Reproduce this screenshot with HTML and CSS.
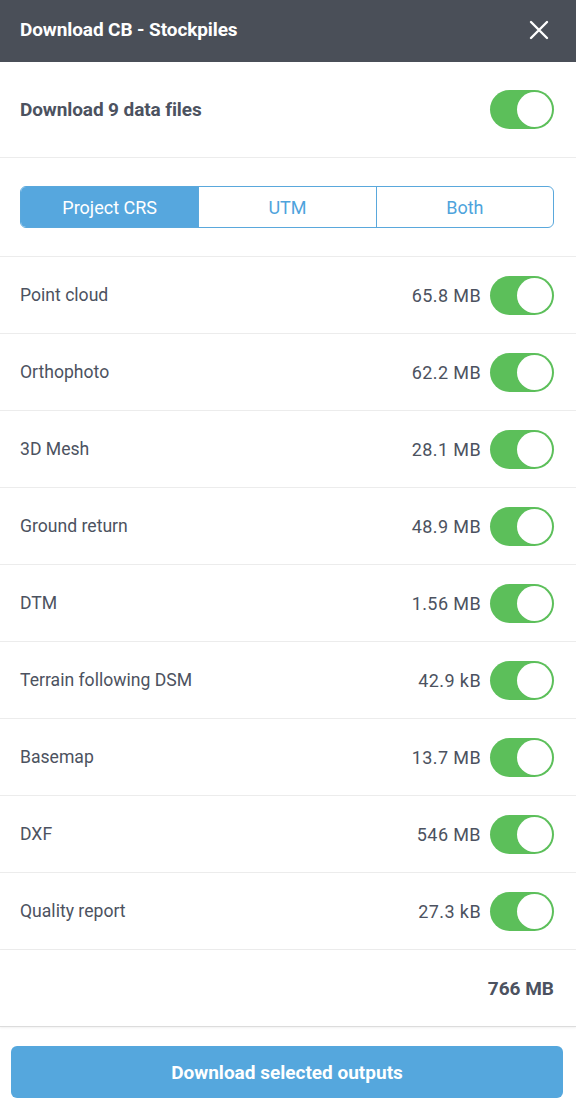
FILE: index.html
```html
<!DOCTYPE html>
<html>
<head>
<meta charset="utf-8">
<link rel="stylesheet" href="styles.css">
</head>
<body>
<div class="panel">
  <header class="header">
    <h1 class="title">Download CB - Stockpiles</h1>
    <button class="close" aria-label="Close">
      <svg width="20" height="20" viewBox="0 0 20 20"><path d="M2 2 L18 18 M18 2 L2 18" stroke="#fff" stroke-width="2.4" stroke-linecap="round"/></svg>
    </button>
  </header>

  <div class="master">
    <span class="master-label">Download 9 data files</span>
    <span class="toggle"><span class="knob"></span></span>
  </div>

  <div class="seg-wrap">
    <div class="seg">
      <span class="seg-item active">Project CRS</span>
      <span class="seg-item">UTM</span>
      <span class="seg-item">Both</span>
    </div>
  </div>

  <ul class="list">
    <li class="row"><span class="label">Point cloud</span><span class="right"><span class="size">65.8 MB</span><span class="toggle"><span class="knob"></span></span></span></li>
    <li class="row"><span class="label">Orthophoto</span><span class="right"><span class="size">62.2 MB</span><span class="toggle"><span class="knob"></span></span></span></li>
    <li class="row"><span class="label">3D Mesh</span><span class="right"><span class="size">28.1 MB</span><span class="toggle"><span class="knob"></span></span></span></li>
    <li class="row"><span class="label">Ground return</span><span class="right"><span class="size">48.9 MB</span><span class="toggle"><span class="knob"></span></span></span></li>
    <li class="row"><span class="label">DTM</span><span class="right"><span class="size">1.56 MB</span><span class="toggle"><span class="knob"></span></span></span></li>
    <li class="row"><span class="label">Terrain following DSM</span><span class="right"><span class="size">42.9 kB</span><span class="toggle"><span class="knob"></span></span></span></li>
    <li class="row"><span class="label">Basemap</span><span class="right"><span class="size">13.7 MB</span><span class="toggle"><span class="knob"></span></span></span></li>
    <li class="row"><span class="label">DXF</span><span class="right"><span class="size">546 MB</span><span class="toggle"><span class="knob"></span></span></span></li>
    <li class="row"><span class="label">Quality report</span><span class="right"><span class="size">27.3 kB</span><span class="toggle"><span class="knob"></span></span></span></li>
  </ul>

  <div class="total">766 MB</div>

  <div class="footer">
    <button class="download">Download selected outputs</button>
  </div>
</div>
</body>
</html>
```

FILE: styles.css
```css
html, body {
  margin: 0;
  padding: 0;
  background: #fff;
}
body {
  font-family: Roboto, "Liberation Sans", Arial, sans-serif;
  color: #4c5260;
}
.panel {
  width: 576px;
  height: 1112px;
  display: flex;
  flex-direction: column;
}
.header {
  height: 62px;
  background: #4a4f58;
  display: flex;
  align-items: center;
  justify-content: space-between;
  padding: 0 27px 3px 20px;
  box-sizing: border-box;
  flex: none;
}
.title {
  margin: 0;
  font-size: 19px;
  font-weight: 700;
  color: #fff;
  letter-spacing: -0.1px;
}
.close {
  background: none;
  border: 0;
  padding: 0;
  width: 20px;
  height: 20px;
  display: flex;
}
.master {
  height: 96px;
  box-sizing: border-box;
  border-bottom: 1px solid #ececec;
  display: flex;
  align-items: center;
  justify-content: space-between;
  padding: 0 22px 0 20px;
  flex: none;
}
.master-label {
  font-size: 19px;
  font-weight: 700;
  color: #4c5260;
  letter-spacing: -0.1px;
}
.toggle {
  width: 64px;
  height: 39px;
  border-radius: 20px;
  background: #5cbf5a;
  box-sizing: border-box;
  display: flex;
  justify-content: flex-end;
  align-items: center;
  padding: 2px;
  flex: none;
}
.knob {
  width: 35px;
  height: 35px;
  border-radius: 50%;
  background: #fff;
}
.seg-wrap {
  height: 99px;
  box-sizing: border-box;
  padding: 28px 22px 0 20px;
  border-bottom: 1px solid #ececec;
  flex: none;
}
.seg {
  display: grid;
  grid-template-columns: 1fr 1fr 1fr;
  height: 42px;
  border: 1px solid #5aa8dc;
  border-radius: 6px;
  overflow: hidden;
  box-sizing: border-box;
}
.seg-item {
  display: flex;
  align-items: center;
  justify-content: center;
  font-size: 18px;
  color: #4ea3dc;
  border-left: 1px solid #5aa8dc;
}
.seg-item:first-child {
  border-left: 0;
}
.seg-item.active {
  background: #56a7de;
  color: #fff;
}
.list {
  list-style: none;
  margin: 0;
  padding: 0;
  flex: none;
}
.row {
  height: 77px;
  box-sizing: border-box;
  border-bottom: 1px solid #ececec;
  display: flex;
  align-items: center;
  justify-content: space-between;
  padding: 0 22px 0 20px;
}
.label {
  font-size: 17.6px;
  color: #4c5260;
}
.right {
  display: flex;
  align-items: center;
  gap: 9px;
}
.size {
  font-size: 18px;
  letter-spacing: 0.4px;
  color: #4c5260;
}
.total {
  height: 77px;
  box-sizing: border-box;
  display: flex;
  align-items: center;
  justify-content: flex-end;
  padding: 0 22px 0 20px;
  font-size: 19px;
  font-weight: 700;
  color: #4c5260;
  border-bottom: 1px solid #dcdcdc;
  box-shadow: 0 1px 2px rgba(0,0,0,0.06);
  flex: none;
}
.footer {
  padding: 19px 13px 0 11px;
  flex: none;
}
.download {
  width: 100%;
  height: 52px;
  border: 0;
  border-radius: 6px;
  background: #55a7dd;
  color: #fff;
  font-family: Roboto, "Liberation Sans", Arial, sans-serif;
  font-size: 19px;
  font-weight: 700;
  display: block;
}
```
